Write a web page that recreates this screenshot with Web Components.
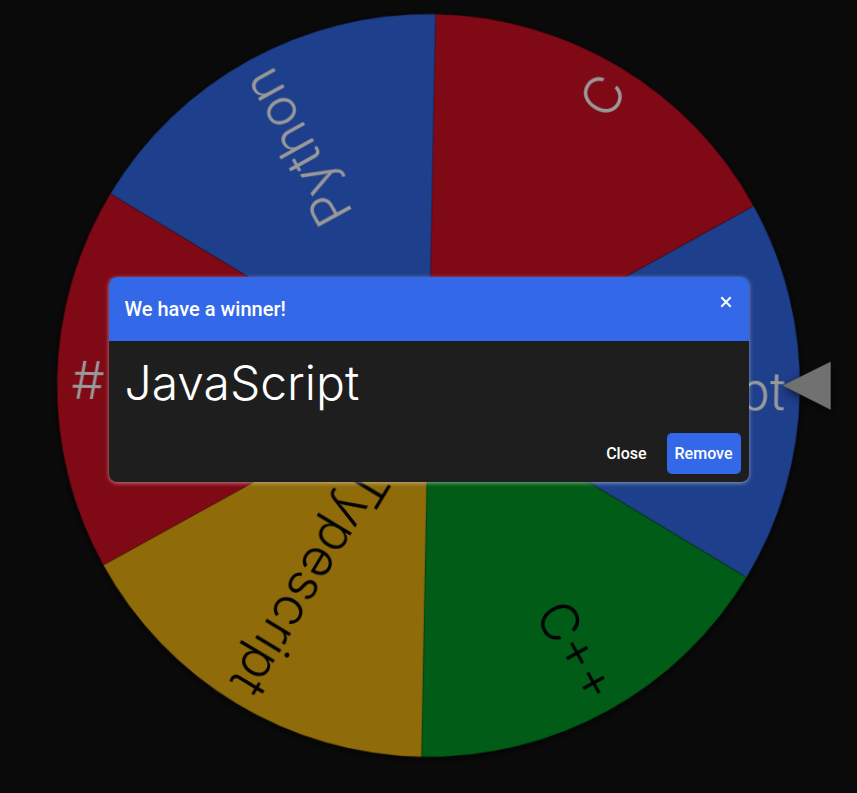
<!DOCTYPE html>
<html lang="en">
<head>
<meta charset="utf-8">
<meta name="viewport" content="width=device-width, initial-scale=1">
<title>Wheel of languages</title>
<style>
  body { margin: 0; background: #121212; color: #fff; font-family: Roboto, "Open Sans", sans-serif; }
</style>
</head>
<body>
<wheel-page>
  <prize-wheel></prize-wheel>
  <winner-dialog slot="dialog">
    <span slot="title">We have a winner!</span>
    JavaScript
    <dialog-button slot="actions">Close</dialog-button>
    <dialog-button slot="actions" primary>Remove</dialog-button>
  </winner-dialog>
</wheel-page>

<template id="page-template">
  <style>
    :host { display: grid; min-height: 100vh; overflow: hidden; }
    .stage, .backdrop { grid-area: 1 / 1; }
    .stage { display: grid; }
    .backdrop {
      z-index: 1; display: flex; align-items: center; justify-content: center;
      box-sizing: border-box; padding: 0 8px 34px; background: rgba(0, 0, 0, .4);
    }
  </style>
  <div class="stage"><slot></slot></div>
  <div class="backdrop"><slot name="dialog"></slot></div>
</template>

<template id="wheel-template">
  <style>
    :host { display: block; }
    svg { display: block; width: 100%; height: 100vh; }
    .disc { filter: drop-shadow(0 2px 5px rgba(0, 0, 0, .8)); }
    .pointer { filter: drop-shadow(2px 3px 5px rgba(0, 0, 0, .7)); }
    text { font: 300 52px Inter, Lato, sans-serif; text-anchor: end; }
  </style>
  <svg viewBox="0 0 857 793" role="img" aria-label="Wheel">
    <g class="disc" transform="translate(428.5 385.5) rotate(1.1)"></g>
    <path class="pointer" d="M783 385.5 830.500 362V409.500Z" fill="#bdbdbd" stroke="#a0a0a0" stroke-width=".6"/>
  </svg>
</template>

<template id="dialog-template">
  <style>
    :host { display: block; width: 100%; max-width: 640px; }
    section { border-radius: 8px; overflow: hidden; background: #1e1e1e; box-shadow: 0 1px 4px rgba(255, 255, 255, .5); }
    header { display: flex; align-items: flex-start; justify-content: space-between; background: #3369e8; padding: 0 8px 0 16px; height: 64px; }
    h2 { margin: 0; font-size: 20px; line-height: 64px; font-weight: 500; }
    .dismiss { display: grid; place-items: center; width: 30px; height: 30px; margin-top: 10px; padding: 0; border: 0; background: none; color: inherit; }
    .dismiss svg { width: 12px; height: 12px; }
    .body { padding: 8px 16px 16px; font: 300 48px/68px Inter, Lato, sans-serif; }
    footer { display: flex; justify-content: flex-end; gap: 12px; padding: 0 8px 8px; }
  </style>
  <section role="dialog" aria-labelledby="heading">
    <header>
      <h2 id="heading"><slot name="title"></slot></h2>
      <button class="dismiss" type="button" aria-label="Close dialog">
        <svg viewBox="0 0 12 12" fill="none" stroke="currentColor" stroke-width="2"><path d="M1.300 1.300 10.700 10.700M10.700 1.300 1.300 10.700"/></svg>
      </button>
    </header>
    <div class="body"><slot></slot></div>
    <footer><slot name="actions"></slot></footer>
  </section>
</template>

<template id="button-template">
  <style>
    :host { display: inline-block; }
    button { display: block; height: 41px; padding: 0 8px; border: 0; border-radius: 5px; background: none; color: #fff; font: 500 16px/24px Roboto, "Open Sans", sans-serif; }
    :host([primary]) button { background: #3369e8; }
  </style>
  <button type="button"><slot></slot></button>
</template>

<script>
  class TemplateElement extends HTMLElement {
    constructor() {
      super();
      const template = document.getElementById(this.constructor.templateId);
      this.attachShadow({ mode: 'open' }).append(template.content.cloneNode(true));
    }
  }

  class WheelPage extends TemplateElement { static templateId = 'page-template'; }
  class WinnerDialog extends TemplateElement { static templateId = 'dialog-template'; }
  class DialogButton extends TemplateElement { static templateId = 'button-template'; }

  class PrizeWheel extends TemplateElement {
    static templateId = 'wheel-template';
    static radius = 371.5;
    static slices = [
      ['JavaScript', '#3369e8', '#fff'],
      ['C++', '#009925', '#000'],
      ['Typescript', '#eeb211', '#000'],
      ['#', '#d50f25', '#fff'],
      ['Python', '#3369e8', '#fff'],
      ['C', '#d50f25', '#fff']
    ];

    connectedCallback() {
      const { radius, slices } = PrizeWheel;
      const step = 360 / slices.length;
      const half = step / 2 * Math.PI / 180;
      const x = radius * Math.cos(half);
      const y = radius * Math.sin(half);
      this.shadowRoot.querySelector('.disc').innerHTML = slices.map(([name, fill, ink], i) => `
        <g transform="rotate(${i * step})">
          <path d="M0 0 ${x} ${-y}A${radius} ${radius} 0 0 1 ${x} ${y}Z" fill="${fill}" stroke="#000" stroke-opacity=".35" stroke-width=".6"/>
          <text x="357" y="18" fill="${ink}">${name}</text>
        </g>`).join('');
    }
  }

  customElements.define('wheel-page', WheelPage);
  customElements.define('prize-wheel', PrizeWheel);
  customElements.define('winner-dialog', WinnerDialog);
  customElements.define('dialog-button', DialogButton);
</script>
</body>
</html>
